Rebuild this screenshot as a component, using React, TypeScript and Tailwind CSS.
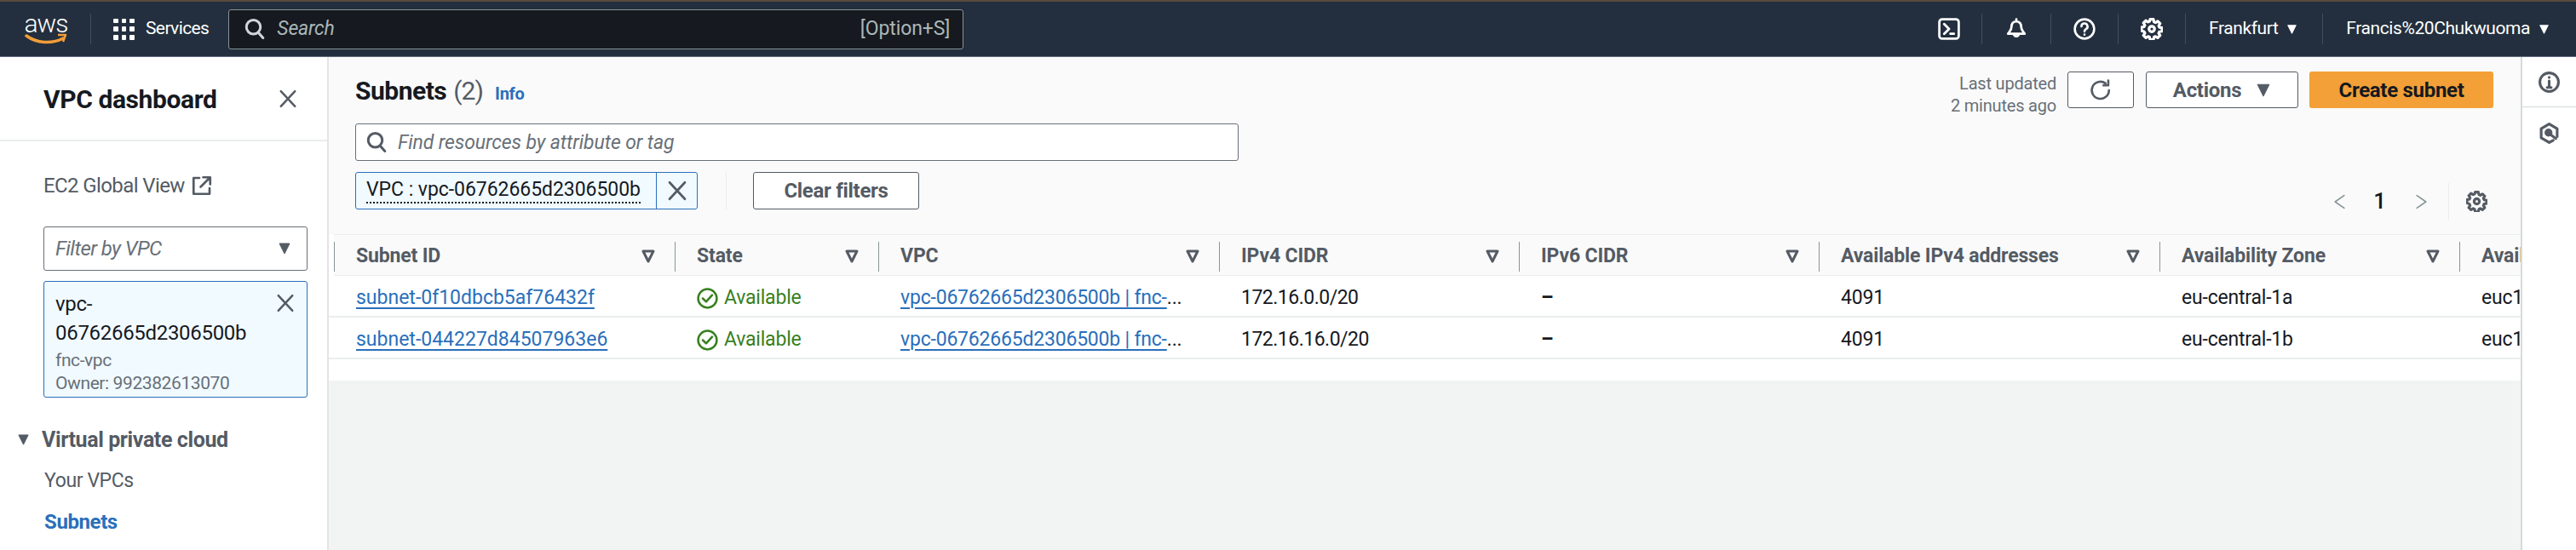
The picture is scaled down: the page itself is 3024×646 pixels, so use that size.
import type { ReactNode } from "react";

const font = { fontFamily: "Roboto, 'Liberation Sans', sans-serif" };

function Icon({ className, children, sw = 2 }: { className: string; children: ReactNode; sw?: number }) {
  return (
    <svg viewBox="0 0 16 16" fill="none" stroke="currentColor" strokeWidth={sw} strokeLinecap="round" strokeLinejoin="round" className={className}>
      {children}
    </svg>
  );
}

const GEAR =
  "M6.800 1h2.400l.4 1.900 1.100.5 1.600-1 1.700 1.700-1 1.600.5 1.100 1.900.4v2.400l-1.900.4-.5 1.100 1 1.600-1.700 1.700-1.600-1-1.100.5-.4 1.900H6.800l-.4-1.900-1.100-.5-1.600 1-1.700-1.700 1-1.600-.5-1.100L.6 9.200V6.800l1.900-.4.5-1.100-1-1.600 1.700-1.700 1.600 1 1.100-.5z";

function Gear({ className }: { className: string }) {
  return (
    <Icon className={className}>
      <path d={GEAR} />
      <circle cx="8" cy="8" r="2" />
    </Icon>
  );
}

function CloseX({ className }: { className: string }) {
  return (
    <Icon className={className} sw={1.8}>
      <path d="M2 1.500l12 13M14 1.500L2 14.500" />
    </Icon>
  );
}

function Caret({ className }: { className: string }) {
  return (
    <svg viewBox="0 0 16 16" fill="currentColor" stroke="currentColor" strokeWidth={1} strokeLinejoin="round" className={className}>
      <path d="M2 2h12L8 14z" />
    </svg>
  );
}

function Search({ className }: { className: string }) {
  return (
    <Icon className={className}>
      <circle cx="7" cy="6.500" r="5.500" />
      <path d="M11 11l3.500 4" />
    </Icon>
  );
}

function Divider() {
  return <div className="h-[36px] w-px bg-[#414d5c]" />;
}

function TopNav() {
  return (
    <div className="flex h-[65px] shrink-0 items-center border-b border-[#5f6b7a] bg-[#232f3e] text-white">
      <div className="ml-[28px] flex w-[52px] flex-col items-center">
        <span className="text-[30px] font-light leading-[24px] tracking-[-1px]">aws</span>
        <svg viewBox="0 0 50 14" className="mt-[-1px] h-[14px] w-[50px]" fill="none">
          <path d="M2 3c12 9 30 10 43 3" stroke="#f29d38" strokeWidth="3.500" strokeLinecap="round" />
          <path d="M39 2l9 0-3 8" stroke="#f29d38" strokeWidth="2.500" strokeLinejoin="round" />
        </svg>
      </div>
      <div className="ml-[26px] h-[36px] w-px bg-[#414d5c]" />
      <div className="ml-[26px] grid h-[25px] w-[25px] grid-cols-3 gap-[4px]">
        {[0, 1, 2, 3, 4, 5, 6, 7, 8].map((i) => (
          <div key={i} className="rounded-[1px] bg-white" />
        ))}
      </div>
      <span className="ml-[13px] text-[21px] tracking-[-0.6px]">Services</span>
      <div className="ml-[23px] flex h-[47px] w-[863px] items-center rounded-[3px] border border-[#879596] bg-[#16191f] pl-[18px] pr-[15px] text-[#aab7b8]">
        <Search className="h-[24px] w-[24px] text-[#d1d5db]" />
        <span className="ml-[14px] text-[23px] italic tracking-[-0.2px]">Search</span>
        <span className="ml-auto text-[23px] tracking-[-0.1px]">[Option+S]</span>
      </div>
      <div className="ml-auto flex items-center">
        <Icon className="h-[26px] w-[26px]" sw={1.7}>
          <rect x="1" y="1" width="14" height="14" rx="2" />
          <path d="M4.500 4.500L8 8l-3.500 3.500M9 11.500h2.500" />
        </Icon>
        <div className="ml-[25px]"><Divider /></div>
        <Icon className="ml-[27px] h-[26px] w-[26px]" sw={1.7}>
          <path d="M8 1v1.500M8 2.500c-2.500 0-3.500 2-3.500 4 0 2.500-1.500 3.500-2.500 5h12c-1-1.500-2.500-2.500-2.500-5 0-2-1-4-3.500-4zM6.200 11.500a1.800 1.800 0 0 0 3.600 0" />
        </Icon>
        <div className="ml-[27px]"><Divider /></div>
        <Icon className="ml-[26px] h-[26px] w-[26px]" sw={1.6}>
          <circle cx="8" cy="8" r="7" />
          <path d="M5.800 6.200a2.200 2.200 0 1 1 3.300 1.900c-.7.4-1.100.8-1.100 1.700M8 12v.1" />
        </Icon>
        <div className="ml-[26px]"><Divider /></div>
        <Gear className="ml-[26px] h-[26px] w-[26px]" />
        <div className="ml-[26px]"><Divider /></div>
        <span className="ml-[27px] text-[21px] tracking-[-0.42px]">Frankfurt</span>
        <Caret className="ml-[10px] h-[13px] w-[13px]" />
        <div className="ml-[29px]"><Divider /></div>
        <span className="ml-[27px] text-[21px] tracking-[-0.42px]">Francis%20Chukwuoma</span>
        <Caret className="ml-[10px] mr-[31px] h-[13px] w-[13px]" />
      </div>
    </div>
  );
}

function Sidebar() {
  return (
    <aside className="flex w-[386px] shrink-0 flex-col border-r-2 border-[#e2e4e6] bg-white">
      <div className="flex h-[99px] items-center border-b-2 border-[#eaeded] pl-[51px] pr-[35px] pt-[1px]">
        <span className="text-[30px] font-bold tracking-[-0.4px] text-[#16191f]">VPC dashboard</span>
        <CloseX className="ml-auto h-[22px] w-[22px] text-[#545b64]" />
      </div>
      <div className="flex flex-col pl-[51px] pr-[23px]">
        <div className="mt-[33px] flex h-[37px] items-center text-[24px] tracking-[-0.6px] text-[#545b64]">
          EC2 Global View
          <Icon className="ml-[8px] h-[24px] w-[24px]" sw={1.8}>
            <path d="M6 2H1.500v12.500H14V10M9 1.500h5.500V7M14 2L7 9" />
          </Icon>
        </div>
        <div className="mt-[30px] flex h-[52px] items-center rounded-[3px] border border-[#687078] pl-[13px] pr-[18px]">
          <span className="text-[24px] italic tracking-[-0.6px] text-[#687078]">Filter by VPC</span>
          <Caret className="ml-auto h-[16px] w-[16px] text-[#545b64]" />
        </div>
        <div className="mt-[12px] h-[137px] rounded-[3px] border border-[#2a6fbb] bg-[#f1faff] pl-[13px] pr-[14px]">
          <div className="flex">
            <div className="pt-[9px] text-[24px] leading-[34px] tracking-[-0.3px] text-[#16191f]">
              vpc-
              <br />
              06762665d2306500b
            </div>
            <CloseX className="ml-auto mt-[14px] h-[22px] w-[22px] text-[#545b64]" />
          </div>
          <div className="mt-[2px] text-[21px] leading-[27px] tracking-[-0.4px] text-[#687078]">
            fnc-vpc
            <br />
            Owner: 992382613070
          </div>
        </div>
      </div>
      <div className="mt-[31px] flex items-center pl-[20px] text-[#545b64]">
        <Caret className="h-[15px] w-[15px]" />
        <span className="ml-[14px] text-[25px] font-bold tracking-[-0.4px]">Virtual private cloud</span>
      </div>
      <div className="ml-[52px] mt-[12px] text-[23px] tracking-[-0.4px] text-[#545b64]">Your VPCs</div>
      <div className="ml-[52px] mt-[13px] text-[24px] font-bold tracking-[-0.4px] text-[#2a6fbb]">Subnets</div>
    </aside>
  );
}

function PageHeader() {
  return (
    <div className="flex h-[208px] shrink-0 flex-col pl-[31px] pr-[32px] pt-[17px]">
      <div className="flex h-[43px] items-start">
        <div className="flex items-baseline">
          <span className="text-[30px] font-bold tracking-[-0.5px] text-[#16191f]">Subnets</span>
          <span className="ml-[8px] text-[30px] tracking-[-0.9px] text-[#545b64]">(2)</span>
          <span className="ml-[14px] text-[20px] font-bold tracking-[-0.3px] text-[#2a6fbb]">Info</span>
        </div>
        <div className="ml-auto w-[240px] pt-[1px] text-right text-[20px] leading-[26px] tracking-[-0.2px] text-[#687078]">
          Last updated
          <br />2 minutes ago
        </div>
        <button className="ml-[13px] flex h-[43px] w-[78px] items-center justify-center rounded-[3px] border border-[#545b64] bg-white text-[#545b64]">
          <Icon className="h-[26px] w-[26px]" sw={1.6}>
            <path d="M14 8a6.200 6.200 0 1 1-2.500-5M13.500 1v3.500H10" />
          </Icon>
        </button>
        <button className="ml-[14px] flex h-[43px] w-[179px] items-center justify-center rounded-[3px] border border-[#545b64] bg-white text-[24px] font-bold tracking-[-0.3px] text-[#545b64]">
          Actions
          <Caret className="ml-[17px] h-[18px] w-[18px]" />
        </button>
        <button className="ml-[13px] h-[43px] w-[216px] rounded-[3px] bg-[#f2a037] text-[24px] font-bold tracking-[-0.3px] text-[#16191f]">
          Create subnet
        </button>
      </div>
      <div className="mt-[18px] flex h-[44px] w-[1037px] items-center rounded-[3px] border border-[#687078] bg-white pl-[12px]">
        <Search className="h-[24px] w-[24px] text-[#545b64]" />
        <span className="ml-[13px] pt-[2px] text-[23px] italic tracking-[-0.1px] text-[#687078]">Find resources by attribute or tag</span>
      </div>
      <div className="mt-[13px] flex">
        <div className="flex h-[44px] w-[402px] rounded-[3px] border border-[#2a6fbb] bg-[#f1faff]">
          <div className="flex flex-1 items-center pl-[12px]">
            <span className="border-b-2 border-dotted border-[#16191f] text-[23px] leading-[28px] tracking-[-0.05px] text-[#16191f]">VPC : vpc-06762665d2306500b</span>
          </div>
          <div className="flex w-[48px] items-center justify-center border-l border-[#2a6fbb]">
            <CloseX className="h-[24px] w-[24px] text-[#545b64]" />
          </div>
        </div>
        <div className="ml-[33px] h-[44px] w-px bg-[#eaeded]" />
        <button className="ml-[31px] h-[44px] w-[195px] rounded-[3px] border border-[#545b64] bg-white text-[24px] font-bold tracking-[-0.3px] text-[#545b64]">
          Clear filters
        </button>
        <div className="ml-auto mt-[13px] flex h-[43px] items-center pr-[7px]">
          <Icon className="h-[26px] w-[17px] text-[#879596]" sw={1.5}>
            <path d="M13 1L3 8l10 7" />
          </Icon>
          <span className="ml-[31px] text-[26px] font-medium text-[#16191f]">1</span>
          <Icon className="ml-[33px] h-[26px] w-[17px] text-[#879596]" sw={1.5}>
            <path d="M3 1l10 7-10 7" />
          </Icon>
          <div className="ml-[23px] h-[43px] w-px bg-[#eaeded]" />
          <Gear className="ml-[20px] h-[25px] w-[25px] text-[#545b64]" />
        </div>
      </div>
    </div>
  );
}

const COLUMNS = ["Subnet ID", "State", "VPC", "IPv4 CIDR", "IPv6 CIDR", "Available IPv4 addresses", "Availability Zone", "Available"];

const ROWS = [
  { id: "subnet-0f10dbcb5af76432f", cidr: "172.16.0.0/20", az: "eu-central-1a" },
  { id: "subnet-044227d84507963e6", cidr: "172.16.16.0/20", az: "eu-central-1b" },
];

const GRID = "grid grid-cols-[400px_239px_400px_352px_352px_400px_352px_300px]";

function SubnetTable() {
  return (
    <div className="min-w-0 overflow-hidden bg-white">
      <div className={`${GRID} ml-[6px] h-[49px] border-y border-[#eaeded] bg-[#fafafa]`}>
        {COLUMNS.map((c) => (
          <div key={c} className="my-[8px] flex items-center whitespace-nowrap border-l border-[#879596] pl-[25px] pr-[23px] text-[23px] font-bold tracking-[-0.15px] text-[#545b64]">
            {c}
            <svg viewBox="0 0 16 16" fill="none" stroke="currentColor" strokeWidth={3} strokeLinejoin="round" className="ml-auto h-[16px] w-[16px]">
              <path d="M2 2h12L8 14z" />
            </svg>
          </div>
        ))}
      </div>
      {ROWS.map((r) => (
        <div key={r.id} className="border-b-2 border-[#eaeded]">
          <div className={`${GRID} ml-[6px] h-[47px] items-center pt-[5px] text-[23px] tracking-[-0.2px] text-[#16191f]`}>
            <div className="pl-[26px]">
              <span className="tracking-[0px] text-[#2a6fbb] underline decoration-2 underline-offset-[4px]">{r.id}</span>
            </div>
            <div className="flex items-center pl-[26px] text-[#37801f]">
              <Icon className="h-[25px] w-[25px]" sw={1.6}>
                <circle cx="8" cy="8" r="7" />
                <path d="M4.500 8l2.500 2.500L11.500 5.500" />
              </Icon>
              <span className="ml-[7px]">Available</span>
            </div>
            <div className="pl-[26px]">
              <span className="text-[#2a6fbb] underline decoration-2 underline-offset-[4px]">vpc-06762665d2306500b | fnc-</span>
              ...
            </div>
            <div className="pl-[26px] tracking-[-0.5px]">{r.cidr}</div>
            <div className="pl-[26px] font-bold">–</div>
            <div className="pl-[26px]">4091</div>
            <div className="pl-[26px]">{r.az}</div>
            <div className="pl-[26px]">euc1-az3</div>
          </div>
        </div>
      ))}
      <div className="h-[25px]" />
    </div>
  );
}

function RightRail() {
  return (
    <div className="flex w-[65px] shrink-0 flex-col items-center border-l-2 border-[#d5dbdb] bg-white text-[#545b64]">
      <div className="flex h-[59px] w-full items-center justify-center border-b border-[#d5dbdb]">
        <Icon className="h-[25px] w-[25px]" sw={2}>
          <circle cx="8" cy="8" r="7" />
          <path d="M8 7v5M6.500 12h3M8 4.300v.1" />
        </Icon>
      </div>
      <Icon className="mt-[18px] h-[25px] w-[25px]" sw={2}>
        <path d="M11 13.300L8 15l-6-3.500v-7L8 1l6 3.500v6" />
        <circle cx="7.500" cy="7.500" r="2" fill="currentColor" />
        <path d="M9 9l4 3" />
      </Icon>
    </div>
  );
}

export default function App() {
  return (
    <div className="flex h-[646px] w-[3024px] flex-col overflow-hidden bg-white" style={font}>
      <div className="h-[2px] shrink-0 bg-[#57493d]" />
      <TopNav />
      <div className="flex min-h-0 flex-1">
        <Sidebar />
        <main className="flex min-w-0 flex-1 flex-col bg-[#f2f3f3]">
          <div className="bg-[#fafafa]">
            <PageHeader />
          </div>
          <SubnetTable />
        </main>
        <RightRail />
      </div>
    </div>
  );
}
